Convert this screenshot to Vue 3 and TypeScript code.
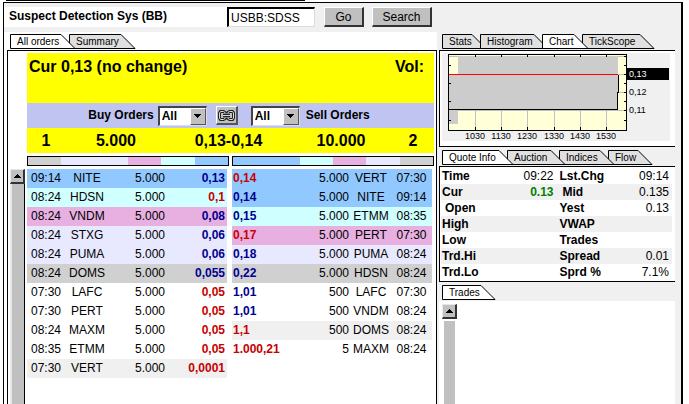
<script setup lang="ts">
interface Order {
  price: string
  up: boolean
  size: string
  maker: string
  time: string
  tone: string
}
interface Tab {
  label: string
  width: number
}

const order = (time: string, maker: string, size: string, price: string, up: boolean, tone: string): Order => ({
  time, maker, size, price, up, tone,
})

const buys: Order[] = [
  order('09:14', 'NITE', '5.000', '0,13', false, 'blue'),
  order('08:24', 'HDSN', '5.000', '0,1', true, 'cyan'),
  order('08:24', 'VNDM', '5.000', '0,08', false, 'pink'),
  order('08:24', 'STXG', '5.000', '0,06', false, 'lilac'),
  order('08:24', 'PUMA', '5.000', '0,06', false, 'lilac'),
  order('08:24', 'DOMS', '5.000', '0,055', false, 'grey'),
  order('07:30', 'LAFC', '5.000', '0,05', true, 'plain'),
  order('07:30', 'PERT', '5.000', '0,05', true, 'plain'),
  order('08:24', 'MAXM', '5.000', '0,05', true, 'plain'),
  order('08:35', 'ETMM', '5.000', '0,05', true, 'plain'),
  order('07:30', 'VERT', '5.000', '0,0001', true, 'pale'),
]
const sells: Order[] = [
  order('07:30', 'VERT', '5.000', '0,14', true, 'blue'),
  order('09:14', 'NITE', '5.000', '0,14', false, 'blue'),
  order('08:35', 'ETMM', '5.000', '0,15', false, 'cyan'),
  order('07:30', 'PERT', '5.000', '0,17', true, 'pink'),
  order('08:24', 'PUMA', '5.000', '0,18', false, 'lilac'),
  order('08:24', 'HDSN', '5.000', '0,22', false, 'grey'),
  order('07:30', 'LAFC', '500', '1,01', false, 'plain'),
  order('08:24', 'VNDM', '500', '1,01', false, 'plain'),
  order('08:24', 'DOMS', '500', '1,1', true, 'pale'),
  order('08:24', 'MAXM', '5', '1.000,21', true, 'plain'),
]

const orderTabs: Tab[] = [{ label: 'All orders', width: 59 }, { label: 'Summary', width: 66 }]
const chartTabs: Tab[] = [
  { label: 'Stats', width: 38 },
  { label: 'Histogram', width: 62 },
  { label: 'Chart', width: 40 },
  { label: 'TickScope', width: 72 },
]
const infoTabs: Tab[] = [
  { label: 'Quote Info', width: 65 },
  { label: 'Auction', width: 52 },
  { label: 'Indices', width: 49 },
  { label: 'Flow', width: 44 },
]
const tradeTabs: Tab[] = [{ label: 'Trades', width: 53 }]

const quote: string[][] = [
  ['Time', '09:22', 'Lst.Chg', '09:14'],
  ['Cur', '0.13', 'Mid', '0.135'],
  ['Open', '', 'Yest', '0.13'],
  ['High', '', 'VWAP', ''],
  ['Low', '', 'Trades', ''],
  ['Trd.Hi', '', 'Spread', '0.01'],
  ['Trd.Lo', '', 'Sprd %', '7.1%'],
]

const hours = [
  { x: 33, label: '1030' },
  { x: 59, label: '1130' },
  { x: 85, label: '1230' },
  { x: 112, label: '1330' },
  { x: 138, label: '1430' },
  { x: 164, label: '1530' },
]

const chain =
  'M7 4.5V3.5L5.5 2.5H2.5L1.5 4V9L2.5 10.5H5.5L7 9.5V8.5M10 4.5V3.5L11.5 2.5H14.5L15.5 4V9L14.5 10.5H11.5L10 9.5V8.5M5 6.5H12'

const tabShape = (w: number) => `M0.5 14.5V0.5H${w - 14}L${w} 14.5Z`
</script>

<template>
  <div class="page">
    <div class="topline"></div>
    <main class="window">
      <section class="left">
        <header class="head">
          <h1>Suspect Detection Sys (BB)</h1>
        </header>
        <nav class="tabs order-tabs">
          <button v-for="(t, i) in orderTabs" :key="t.label" type="button" class="tab" :class="{ front: i === 0 }" :style="{ width: t.width + 'px' }">
            <svg :width="t.width + (i === 0 ? 6 : 0)" height="15"><path :d="tabShape(t.width + (i === 0 ? 6 : 0))" /></svg>
            <span>{{ t.label }}</span>
          </button>
        </nav>
        <div class="book">
          <div class="gutter">
            <button type="button" class="up" aria-label="Scroll up"><svg width="7" height="4"><path d="M3 0h1v1h1v1h1v1h1v1H0V3h1V2h1V1h1z" /></svg></button>
            <div class="track"></div>
          </div>
          <div class="depth">
            <div class="current"><span>Cur 0,13 (no change)</span><span>Vol:</span></div>
            <div class="filters">
              <label class="buy-filter" for="buy">Buy Orders</label>
              <span class="pick"><select id="buy"><option>All</option></select>
                <i><svg width="7" height="4"><path d="M0 0h7v1H6v1H5v1H4v1H3V3H2V2H1V1H0z" /></svg></i></span>
              <button type="button" class="link" aria-label="Link filters">
                <svg width="17" height="13" fill="none">
                  <path class="rim" :d="chain" />
                  <path class="core" :d="chain" />
                </svg>
              </button>
              <span class="pick"><select id="sell"><option>All</option></select>
                <i><svg width="7" height="4"><path d="M0 0h7v1H6v1H5v1H4v1H3V3H2V2H1V1H0z" /></svg></i></span>
              <label class="sell-filter" for="sell">Sell Orders</label>
            </div>
            <div class="best">
              <span>1</span><span>5.000</span><span>0,13-0,14</span><span>10.000</span><span>2</span>
            </div>
            <div class="split bars">
              <div class="bar"><b class="grey"></b><b class="lilac wide"></b><b class="pink"></b><b class="cyan"></b><b class="blue"></b></div>
              <div class="bar"><b class="blue wide"></b><b class="cyan"></b><b class="pink"></b><b class="lilac"></b><b class="grey"></b></div>
            </div>
            <div class="split">
              <table class="orders buys">
                <tbody>
                  <tr v-for="(o, i) in buys" :key="i" :class="o.tone">
                    <td class="time">{{ o.time }}</td>
                    <td class="maker">{{ o.maker }}</td>
                    <td class="size">{{ o.size }}</td>
                    <td class="price" :class="{ red: o.up }">{{ o.price }}</td>
                  </tr>
                </tbody>
              </table>
              <table class="orders sells">
                <tbody>
                  <tr v-for="(o, i) in sells" :key="i" :class="o.tone">
                    <td class="price" :class="{ red: o.up }">{{ o.price }}</td>
                    <td class="size">{{ o.size }}</td>
                    <td class="maker">{{ o.maker }}</td>
                    <td class="time">{{ o.time }}</td>
                  </tr>
                </tbody>
              </table>
            </div>
          </div>
        </div>
      </section>

      <form class="search" @submit.prevent>
        <input type="text" value="USBB:SDSS" aria-label="Symbol" />
        <button type="submit" class="go">Go</button>
        <button type="button" class="find">Search</button>
      </form>

      <aside class="right">
        <nav class="tabs">
          <button v-for="(t, i) in chartTabs" :key="t.label" type="button" class="tab" :class="{ front: i === 2 }" :style="{ width: t.width + 'px' }">
            <svg :width="t.width + (i < 3 ? 6 : 0)" height="15"><path :d="tabShape(t.width + (i < 3 ? 6 : 0))" /></svg>
            <span>{{ t.label }}</span>
          </button>
        </nav>
        <div class="panel chart">
          <svg width="228" height="88" shape-rendering="crispEdges">
            <rect x="7" y="2" width="177" height="75" fill="#ffffd8" />
            <path d="M7 3.5H184M176 21.5H184M176 39.5H184M7 57.5H184M33.5 57V77M59.5 57V77M85.5 57V77M112.5 57V77M138.5 57V77M164.5 57V77" stroke="#c0c0c0" />
            <path d="M16 3H176V39L175 57H7V21H16ZM7 57H16V71H7Z" fill="#ccc" />
            <path d="M7 56.5H175.5V39.5H176.5V21.5" fill="none" stroke="#000" />
            <path d="M7 21.5H176" stroke="#f00" />
            <rect x="6.5" y="1.5" width="178" height="76" fill="none" stroke="#000" />
            <path d="M33.5 2V4M59.5 2V4M85.5 2V4M112.5 2V4M138.5 2V4M164.5 2V4M33.5 74V77M59.5 74V77M85.5 74V77M112.5 74V77M138.5 74V77M164.5 74V77M7 12.5H9M7 30.5H9M7 48.5H9M7 67.5H9M182 3.5H184M182 12.5H184M182 21.5H184M182 30.5H184M182 39.5H184M182 48.5H184M182 57.5H184M182 67.5H184" stroke="#000" />
            <rect x="185" y="15" width="42" height="12" />
            <text x="187" y="24" class="hot">0,13</text>
            <text x="187" y="42">0,12</text>
            <text x="187" y="60">0,11</text>
            <text v-for="h in hours" :key="h.label" :x="h.x" y="86" text-anchor="middle">{{ h.label }}</text>
          </svg>
        </div>

        <nav class="tabs cascade">
          <button v-for="(t, i) in infoTabs" :key="t.label" type="button" class="tab" :class="{ front: i === 0 }" :style="{ width: t.width + 'px', zIndex: infoTabs.length - i }">
            <svg :width="t.width + (i < 3 ? 6 : 0)" height="15"><path :d="tabShape(t.width + (i < 3 ? 6 : 0))" /></svg>
            <span>{{ t.label }}</span>
          </button>
        </nav>
        <div class="panel info">
          <table class="quote">
            <tbody>
              <tr v-for="r in quote" :key="r[0]">
                <th :class="{ inset: r[0] === 'Open' }">{{ r[0] }}</th>
                <td :class="{ gain: r[0] === 'Cur' }">{{ r[1] }}</td>
                <th :class="{ inset: r[2] === 'Mid' }">{{ r[2] }}</th>
                <td>{{ r[3] }}</td>
              </tr>
            </tbody>
          </table>
        </div>

        <nav class="tabs">
          <button v-for="t in tradeTabs" :key="t.label" type="button" class="tab front" :style="{ width: t.width + 'px' }">
            <svg :width="t.width" height="15"><path :d="tabShape(t.width)" /></svg>
            <span>{{ t.label }}</span>
          </button>
        </nav>
        <div class="trades">
          <button type="button" class="up" aria-label="Scroll up"><svg width="7" height="4"><path d="M3 0h1v1h1v1h1v1h1v1H0V3h1V2h1V1h1z" /></svg></button>
          <div class="track"></div>
        </div>
      </aside>
    </main>
  </div>
</template>

<style>
body { margin: 0; background: #fff; overflow: hidden; }
</style>

<style scoped>
* { box-sizing: border-box; }
.page {
  display: flex; flex-direction: column; height: 100vh; padding: 0 6px 0 3px;
  font: 12px/19px "Liberation Sans", Arial, sans-serif; color: #000;
}
.topline { flex: none; width: 44%; height: 1px; margin: 0 0 1px 3px; background: #000; }
.window {
  flex: 1; min-height: 0; display: grid;
  grid-template: 29px minmax(0, 1fr) / 223px minmax(0, 210px) minmax(0, 1fr);
  background: #f0f0f0; border: solid #000; border-width: 1px 2px 0 1px;
}
.left { grid-area: 1 / 1 / 3 / 3; display: flex; flex-direction: column; min-height: 0; }
.head { height: 20px; margin: 4px 0 5px; width: 223px; background: #fff; flex: none; }
h1 { margin: 0; padding-left: 5px; font-size: 12px; line-height: 19px; white-space: nowrap; }
.search { grid-area: 1 / 2 / 2 / 4; display: flex; align-items: flex-start; padding-top: 4px; z-index: 1; }
button, input, select { font: inherit; color: inherit; margin: 0; border-radius: 0; appearance: none; outline: none; }
.search input {
  width: 88px; height: 20px; padding: 0 2px; background: #fff;
  border: solid; border-width: 2px 1px 1px 2px; border-color: #000 #ddd #ddd #000; line-height: 16px;
}
.search button {
  height: 20px; padding: 0; background: #c0c0c0; border: solid; border-width: 1px 2px 2px 1px;
  border-color: #fff #333 #333 #fff; line-height: 16px;
}
.search .go { width: 40px; margin-left: 9px; }
.search .find { width: 60px; margin-left: 8px; }

.tabs { display: flex; flex: none; height: 15px; margin-left: 3px; position: relative; }
.tab { flex: none; position: relative; height: 15px; padding: 0; border: 0; background: none; font-size: 10px; line-height: 15px; text-align: left; }
.tab svg { position: absolute; left: 0; top: 0; fill: #e0e0e0; stroke: #000; overflow: visible; }
.front { z-index: 1; }
.front svg { fill: #fff; }
.tab span { position: relative; padding-left: 7px; white-space: nowrap; }
.order-tabs { height: 18px; margin-left: 0; padding: 2px 0 0 6px; background: #fff; }

.book { flex: 1; min-height: 0; display: flex; background: #fff; border: solid #000; border-width: 1px 1px 0 1px; box-shadow: -3px 0 #fff; margin-left: 3px; }
.gutter { width: 19px; flex: none; display: flex; flex-direction: column; padding: 118px 2px 0 2px; }
.up {
  flex: none; width: 15px; height: 15px; padding: 0; background: #c0c0c0; display: flex; align-items: center; justify-content: center;
  border: solid; border-width: 1px 2px 2px 1px; border-color: #e8e8e8 #333 #333 #e8e8e8;
}
.up svg { display: block; }
.gutter .track { flex: 1; width: 15px; background: #c0c0c0; border: solid; border-width: 0 1px 0 2px; border-color: #000 #000 #000 #e8e8e8; }
.depth { flex: 1; min-width: 0; padding: 2px 2px 0 0; }
.current { height: 50px; padding: 4px 10px 0 2px; display: flex; justify-content: space-between; background: #ff0; font: bold 16px/20px "Liberation Sans", Arial, sans-serif; }
.filters { height: 25px; display: flex; align-items: center; justify-content: center; padding-right: 3px; background: #c0c4f0; font-weight: bold; }
.buy-filter { margin-right: 4px; }
.sell-filter { margin-left: 6px; }
.pick { position: relative; width: 49px; height: 20px; display: flex; }
.pick select { width: 100%; height: 20px; padding: 0 0 0 2px; background: #fff; font-weight: bold; line-height: 16px; border: solid; border-width: 2px 1px 1px 2px; border-color: #444 #ddd #ddd #444; }
.pick i { position: absolute; right: 1px; top: 2px; width: 16px; height: 17px; background: #c0c0c0; border: solid; border-width: 1px; border-color: #fff #555 #555 #fff; display: flex; align-items: center; justify-content: center; pointer-events: none; }
.link { width: 22px; height: 19px; margin: 0 13px 0 9px; padding: 0; background: #c0c0c0; border: solid; border-width: 1px 2px 2px 1px; border-color: #fff #555 #555 #fff; display: flex; align-items: center; justify-content: center; }
.link svg { flex: none; }
.rim { stroke: #222; stroke-width: 3; }
.core { stroke: #ddd; }
.best { height: 25px; display: grid; grid-template-columns: 38px 102px minmax(0, 1fr) 102px 42px; background: #ff0; text-align: center; font: bold 16px/26px "Liberation Sans", Arial, sans-serif; }
.split { display: grid; grid-template-columns: 1fr 1fr; gap: 3px; align-items: start; }
.bars { padding: 3px 0; }
.bar { height: 10px; display: flex; border: 1px solid #000; }
.bar b { flex: 1; }
.bar .wide { flex: 2; }
.blue { background: #90c8ff; }
.cyan { background: #d0ffff; }
.pink { background: #e8b0e0; }
.lilac { background: #e8e8ff; }
.grey { background: #d0d0d0; }
.pale { background: #f0f0f0; }
.orders { width: calc(100% - 2px); border-collapse: collapse; table-layout: fixed; }
td, th { padding: 0; height: 19px; white-space: nowrap; }
.time { width: 38px; text-align: center; }
.maker { width: 42px; padding-left: 2px; text-align: center; }
.size { text-align: right; }
.price { font-weight: bold; color: #000090; }
.red { color: #c80000; }
.buys .price { width: 62px; text-align: right; padding-right: 2px; }
.sells .price { width: 62px; padding-left: 1px; }
.sells .time { width: 41px; }

.right { grid-area: 2 / 3; display: flex; flex-direction: column; min-height: 0; padding: 2px 6px 0 2px; }
.panel { flex: none; background: #fff; border: solid #000; border-width: 1px 0 1px 1px; margin: 1px 0 3px; }
.chart { height: 97px; padding: 2px 5px 0 2px; }
.chart svg { display: block; background: #f0f0f0; font-size: 9px; }
.hot { fill: #fff; }
.info { padding: 1px 3px 1px 1px; }
.quote { width: 100%; border-collapse: collapse; table-layout: fixed; line-height: 16px; }
.quote tr:nth-child(even) { background: #f0f0f0; }
.quote th { height: 16px; text-align: left; width: 55px; padding-left: 1px; }
.quote td { height: 16px; text-align: right; padding-right: 3px; }
.quote th:nth-child(3) { padding-left: 3px; }
.quote .inset { padding-left: 4px; }
.quote th.inset:nth-child(3) { padding-left: 6px; }
.quote .gain { color: #008000; font-weight: bold; }
.trades { flex: 1; min-height: 0; display: flex; flex-direction: column; background: #fff; margin-top: 1px; padding: 3px 3px 0; }
.trades .track { flex: 1; width: 11px; margin: 2px 0 0 2px; background: #c0c0c0; }
</style>
